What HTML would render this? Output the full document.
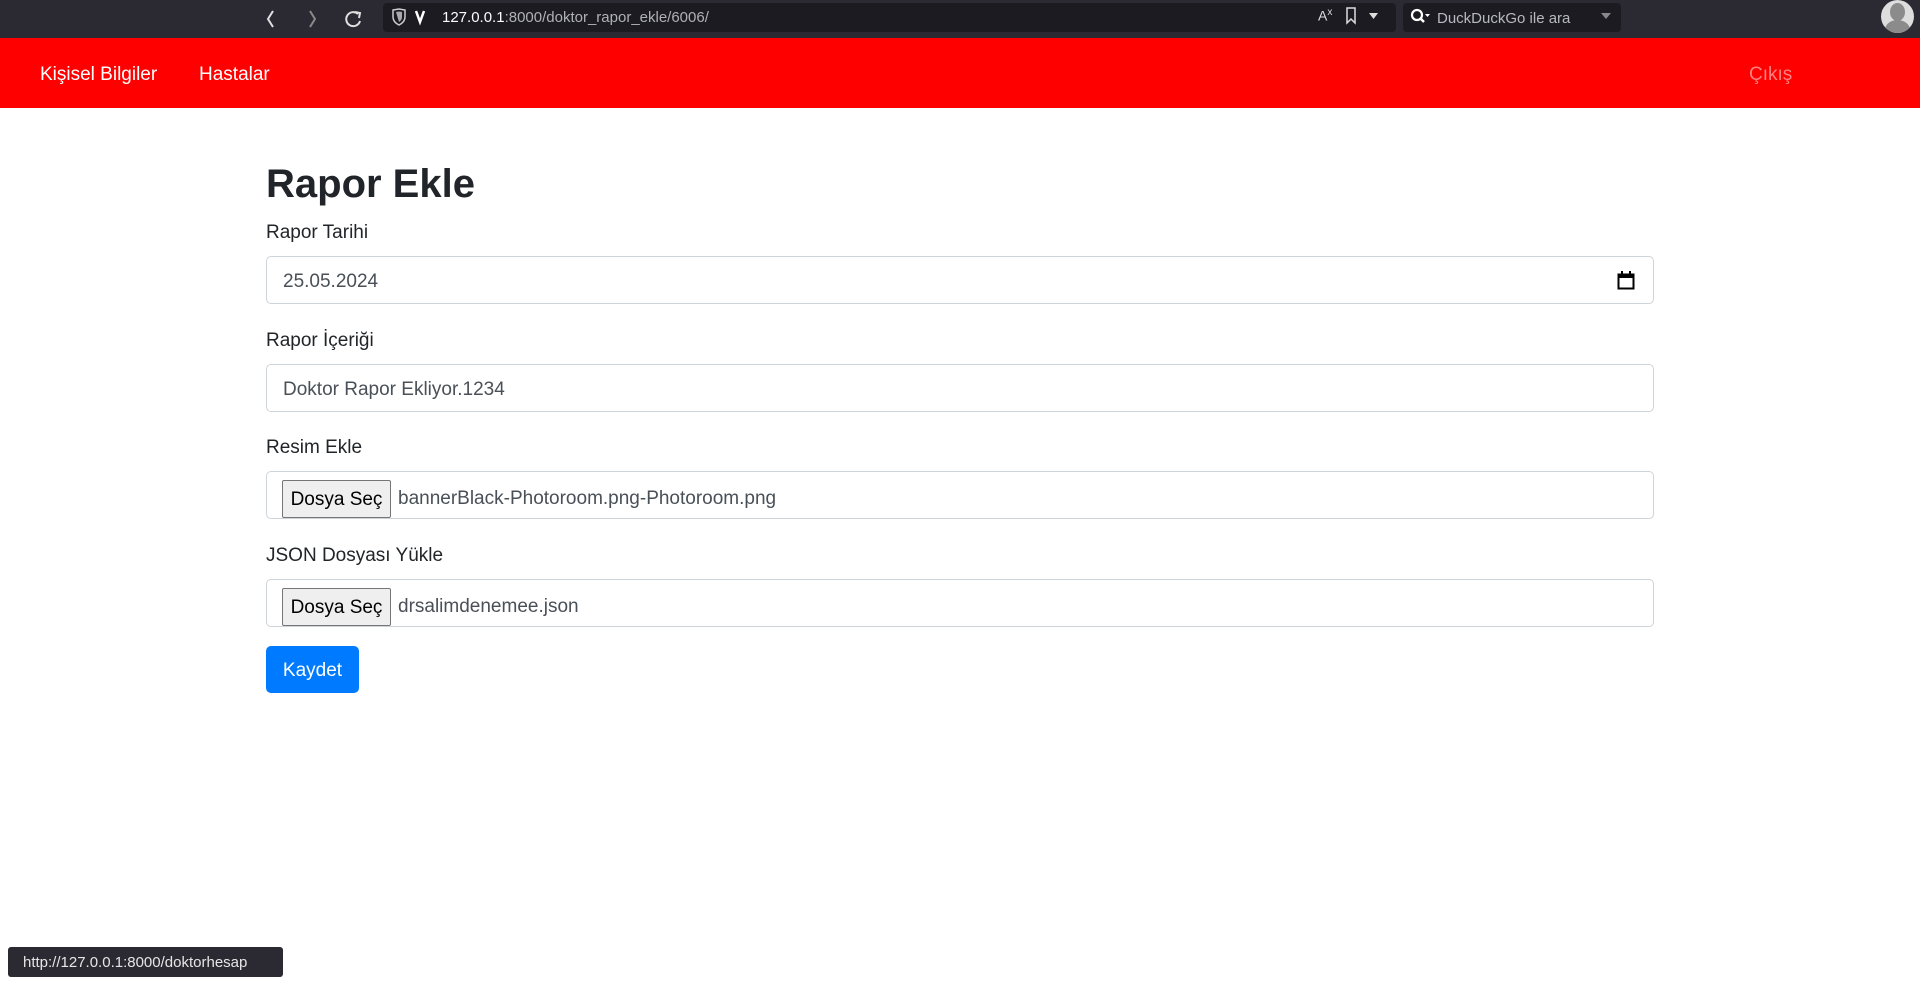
<!DOCTYPE html>
<html><head><meta charset="utf-8"><style>
*{box-sizing:border-box;margin:0;padding:0}
body{width:1920px;height:981px;overflow:hidden;background:#fff;font-family:"Liberation Sans",sans-serif;position:relative}
.a{position:absolute}
.chrome{left:0;top:0;width:1920px;height:38px;background:#2b2a33}
.url{left:383px;top:3px;width:1013px;height:29px;background:#1c1b22;border-radius:4px}
.srch{left:1403px;top:3px;width:218px;height:29px;background:#1c1b22;border-radius:4px}
.nav{left:0;top:38px;width:1920px;height:70px;background:#ff0000}
.nl{color:#fff;font-size:19px;top:64px}
.lbl{left:266px;font-size:19px;color:#212529}
.inp{left:266px;width:1388px;height:48px;border:1px solid #ced4da;border-radius:5px;background:#fff;font-size:19px;color:#495057;padding-left:16px;line-height:50px}
.fb{position:absolute;left:15px;top:8px;width:109px;height:38px;background:#efefef;border:1px solid #767676;border-radius:2px;color:#000;font-size:19px;line-height:38px;text-align:center}
.fn{position:absolute;left:131px;top:1px;line-height:52px}
</style></head><body>
<div class="a chrome"></div>
<svg class="a" style="left:265px;top:6px" width="120" height="26" viewBox="0 0 120 26">
<path d="M8 5 L3 13 L8 21" stroke="#e0e0e0" stroke-width="2" fill="none"/>
<path d="M45 5 L50 13 L45 21" stroke="#8a8a8a" stroke-width="2" fill="none"/>
<path d="M93 8 A7 7 0 1 0 95 15" stroke="#e0e0e0" stroke-width="2" fill="none"/><path d="M90 6 L95 7 L94 12" stroke="#e0e0e0" stroke-width="2" fill="none"/>
</svg>
<div class="a url"></div>
<svg class="a" style="left:390px;top:8px" width="40" height="18"><path d="M3 2 L9 1 L15 2 L15 9 Q15 14 9 17 Q3 14 3 9Z" fill="none" stroke="#ccc" stroke-width="1.5"/><path d="M6 4 L9 3.5 L12 4 L12 9 Q12 12 9 14Z" fill="#aaa"/><path d="M26 3 L30 14 L34 3" stroke="#fff" stroke-width="2.5" fill="none"/></svg>
<div class="a" style="left:442px;top:9px;font-size:15px;color:#fbfbfe">127.0.0.1<span style="color:#b0b0b8">:8000/doktor_rapor_ekle/6006/</span></div>
<div class="a" style="left:1318px;top:7px;font-size:14px;color:#ddd">A<sup style="font-size:10px">x</sup></div>
<svg class="a" style="left:1345px;top:7px" width="40" height="18"><path d="M2 1 H10 V16 L6 12 L2 16Z" fill="none" stroke="#ddd" stroke-width="1.5"/><path d="M24 6 H33 L28.5 12Z" fill="#ddd"/></svg>
<div class="a srch"></div>
<svg class="a" style="left:1410px;top:8px" width="22" height="18"><circle cx="7" cy="7" r="5" fill="none" stroke="#fff" stroke-width="2.2"/><path d="M10 10 L14 14" stroke="#fff" stroke-width="2.5"/><path d="M15 6 H20 L17.5 9Z" fill="#fff"/></svg>
<div class="a" style="left:1437px;top:10px;font-size:15px;color:#b8b8c0">DuckDuckGo ile ara</div>
<svg class="a" style="left:1600px;top:12px" width="12" height="8"><path d="M1 1 H11 L6 7Z" fill="#888"/></svg>
<div class="a" style="left:1881px;top:0px;width:33px;height:33px;border-radius:50%;background:#ddd;overflow:hidden"><div class="a" style="left:9px;top:3px;width:15px;height:18px;border-radius:50%;background:#8b8b8b"></div><div class="a" style="left:4px;top:20px;width:25px;height:20px;border-radius:50%;background:#8b8b8b"></div></div>
<div class="a nav"></div>
<div class="a nl" style="left:40px">Kişisel Bilgiler</div>
<div class="a nl" style="left:199px">Hastalar</div>
<div class="a nl" style="left:1749px;color:#ff8080">Çıkış</div>
<div class="a" style="left:266px;top:162px;font-size:40px;font-weight:bold;color:#212529">Rapor Ekle</div>
<div class="a lbl" style="top:222px">Rapor Tarihi</div>
<div class="a inp" style="top:256px">25.05.2024
<svg class="a" style="left:1350px;top:14px" width="18" height="19"><rect x="1.5" y="3.5" width="15" height="14" fill="none" stroke="#000" stroke-width="2"/><rect x="1" y="3" width="16" height="4" fill="#000"/><rect x="4" y="0" width="2" height="4" fill="#000"/><rect x="12" y="0" width="2" height="4" fill="#000"/></svg></div>
<div class="a lbl" style="top:330px">Rapor İçeriği</div>
<div class="a inp" style="top:364px">Doktor Rapor Ekliyor.1234</div>
<div class="a lbl" style="top:437px">Resim Ekle</div>
<div class="a inp" style="top:471px;padding:0"><div class="fb">Dosya Seç</div><div class="fn">bannerBlack-Photoroom.png-Photoroom.png</div></div>
<div class="a lbl" style="top:545px">JSON Dosyası Yükle</div>
<div class="a inp" style="top:579px;padding:0"><div class="fb">Dosya Seç</div><div class="fn">drsalimdenemee.json</div></div>
<div class="a" style="left:266px;top:646px;width:93px;height:47px;background:#007bff;border-radius:5px;color:#fff;font-size:19px;line-height:50px;text-align:center">Kaydet</div>
<div class="a" style="left:8px;top:947px;width:275px;height:30px;background:#2b2a33;border-radius:3px;color:#e6e6e6;font-size:15px;line-height:31px;padding-left:15px">http://127.0.0.1:8000/doktorhesap</div>
</body></html>
